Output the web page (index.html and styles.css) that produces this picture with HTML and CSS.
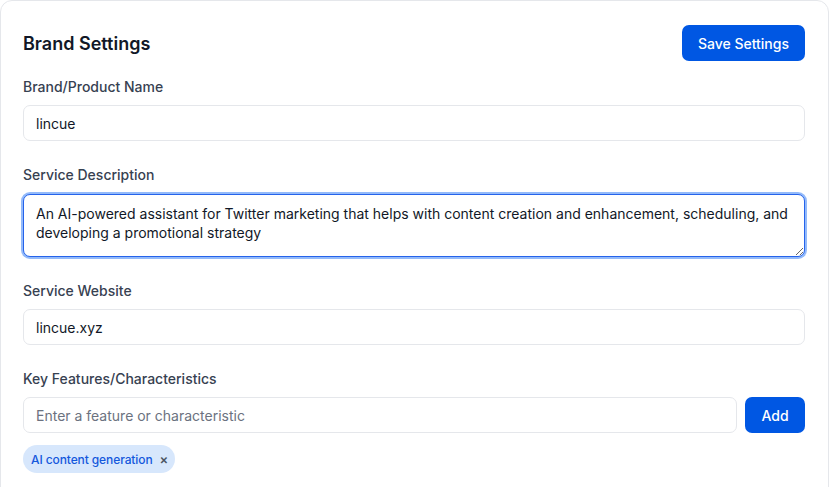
FILE: index.html
```html
<!DOCTYPE html>
<html lang="en">
<head>
    <meta charset="UTF-8">
    <meta name="viewport" content="width=device-width, initial-scale=1.0">
    <title>Brand Settings</title>
    <link rel="stylesheet" href="styles.css">
</head>
<body>

    <div class="card">
        <div class="card-header">
            <h2>Brand Settings</h2>
            <button class="btn">Save Settings</button>
        </div>

        <div class="field">
            <label for="brand">Brand/Product Name</label>
            <input type="text" id="brand" value="lincue">
        </div>

        <div class="field">
            <label for="desc">Service Description</label>
            <textarea id="desc" class="is-focused">An AI-powered assistant for Twitter marketing that helps with content creation and enhancement, scheduling, and developing a promotional strategy</textarea>
        </div>

        <div class="field">
            <label for="site">Service Website</label>
            <input type="text" id="site" value="lincue.xyz">
        </div>

        <div class="field">
            <label for="feature">Key Features/Characteristics</label>
            <div class="add-row">
                <input type="text" id="feature" placeholder="Enter a feature or characteristic">
                <button class="btn btn-add">Add</button>
            </div>
            <div class="tags">
                <span class="tag">AI content generation <span class="tag-x">&times;</span></span>
            </div>
        </div>
    </div>

</body>
</html>
```

FILE: styles.css
```css
body {
    margin: 0;
    font-family: Inter, "Noto Sans", sans-serif;
    background: #fff;
    overflow: hidden;
}
.card {
    width: 829px;
    min-height: 520px;
    box-sizing: border-box;
    border: 1px solid #e5e7eb;
    border-radius: 12px;
    padding: 24px 23px 24px 22px;
}
.card-header {
    display: flex;
    justify-content: space-between;
    align-items: center;
    margin-bottom: 16px;
}
h2 {
    margin: 0;
    font-size: 18px;
    font-weight: 600;
    color: #111827;
}
.btn {
    height: 36px;
    padding: 0 16px;
    background-color: #0057e3;
    color: white;
    border: none;
    border-radius: 7px;
    font-family: inherit;
    font-size: 14px;
    font-weight: 500;
    cursor: pointer;
}
.field {
    margin-bottom: 24px;
}
label {
    display: block;
    font-size: 14px;
    line-height: 20px;
    font-weight: 500;
    color: #374151;
    margin-bottom: 8px;
}
input[type="text"], textarea {
    display: block;
    width: 100%;
    box-sizing: border-box;
    height: 36px;
    padding: 0 12px;
    border: 1px solid #e5e7eb;
    border-radius: 7px;
    font-family: inherit;
    font-size: 14px;
    color: #111827;
    outline: none;
}
input::placeholder {
    color: #6b7280;
}
textarea {
    height: 63px;
    margin-top: 9px;
    padding: 9px 12px;
    line-height: 19px;
    resize: vertical;
}
textarea.is-focused {
    border-color: #2563eb;
    box-shadow: 0 0 0 2px rgba(59, 130, 246, 0.55);
}
.add-row {
    display: flex;
    gap: 8px;
}
.add-row input[type="text"] {
    flex: 1;
}
.btn-add {
    padding: 0 16px;
    width: 60px;
}
.tags {
    margin-top: 12px;
    display: flex;
}
.tag {
    display: inline-flex;
    align-items: center;
    height: 28px;
    padding: 0 7px 0 8px;
    border-radius: 14px;
    background: #d7e7fc;
    color: #1458dc;
    font-size: 12px;
    font-weight: 500;
    letter-spacing: -0.1px;
}
.tag-x {
    margin-left: 7px;
    color: #4b5563;
    font-size: 13px;
    font-weight: 600;
}
```
